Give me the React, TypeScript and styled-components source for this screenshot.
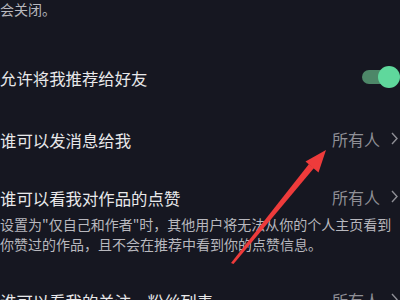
import React from 'react';
import styled, { createGlobalStyle } from 'styled-components';

const Global = createGlobalStyle`
	html, body {
		margin: 0;
		padding: 0;
		background: #161721;
	}
	body {
		font-family: "Noto Sans CJK SC", "Noto Sans", sans-serif;
	}
`;

const Page = styled.div`
	position: relative;
	width: 400px;
	height: 300px;
	overflow: hidden;
	background: #161721;
`;

const List = styled.div`
	display: flex;
	flex-direction: column;
	margin-top: -21px;
`;

const Note = styled.p<{ $top?: number }>`
	margin: ${(p) => p.$top || 0}px 0 0 0;
	font-size: 14px;
	line-height: 20px;
	color: #b8b8be;
	white-space: nowrap;
`;

const Row = styled.div<{ $pad: string }>`
	display: flex;
	flex-direction: column;
	padding: ${(p) => p.$pad};
`;

const Line = styled.div`
	display: flex;
	align-items: center;
	justify-content: space-between;
	height: 22px;
`;

const Title = styled.span`
	font-size: 16.4px;
	line-height: 22px;
	color: #e8e8ea;
	white-space: nowrap;
`;

const Value = styled.span`
	display: flex;
	align-items: center;
	gap: 11px;
	padding-right: 2px;
	margin-top: -3px;
	font-size: 16px;
	color: #8f8f96;

	svg {
		display: block;
	}
`;

const Toggle = styled.div<{ $on: boolean }>`
	position: relative;
	width: 38px;
	height: 22px;
	margin-top: -3px;

	&::before {
		content: '';
		position: absolute;
		left: 0;
		top: 4px;
		width: 32px;
		height: 14px;
		border-radius: 7px;
		background: ${(p) => (p.$on ? '#4d8768' : '#44444c')};
	}

	&::after {
		content: '';
		position: absolute;
		right: 0;
		top: 0;
		width: 22px;
		height: 22px;
		border-radius: 50%;
		background: ${(p) => (p.$on ? '#5fd89c' : '#d0d0d4')};
	}
`;

const Arrow = styled.svg`
	position: absolute;
	left: 0;
	top: 0;
	pointer-events: none;
`;

const Chevron = () => (
	<svg width="7" height="13" viewBox="0 0 7 13">
		<polyline points="1,1 6,6.5 1,12" fill="none" stroke="#8f8f96" strokeWidth="1.4" />
	</svg>
);

const Setting = ({ title, value }: { title: string; value: string }) => (
	<Line>
		<Title>{title}</Title>
		<Value>
			{value}
			<Chevron />
		</Value>
	</Line>
);

const App = () => {
	return (
		<Page>
			<Global />
			<List>
				<Note>关闭后，系统将不会把你推荐给可能认识的人，相关推荐也</Note>
				<Note>会关闭。</Note>

				<Row $pad="48px 0 20px 0">
					<Line>
						<Title>允许将我推荐给好友</Title>
						<Toggle $on />
					</Line>
				</Row>

				<Row $pad="20px 0 20px 0">
					<Setting title="谁可以发消息给我" value="所有人" />
				</Row>

				<Row $pad="16px 0 16px 0">
					<Setting title="谁可以看我对作品的点赞" value="所有人" />
					<Note $top={5}>设置为"仅自己和作者"时，其他用户将无法从你的个人主页看到</Note>
					<Note>你赞过的作品，且不会在推荐中看到你的点赞信息。</Note>
				</Row>

				<Row $pad="20px 0 20px 0">
					<Setting title="谁可以看我的关注、粉丝列表" value="所有人" />
				</Row>
			</List>

			<Arrow width="400" height="300" viewBox="0 0 400 300">
				<polygon points="231,263 233.5,264 314,168 309,164" fill="#ee3b3b" />
				<polygon points="326,150 318.5,172.5 305.5,161.5" fill="#ee3b3b" />
			</Arrow>
		</Page>
	);
};

export default App;
